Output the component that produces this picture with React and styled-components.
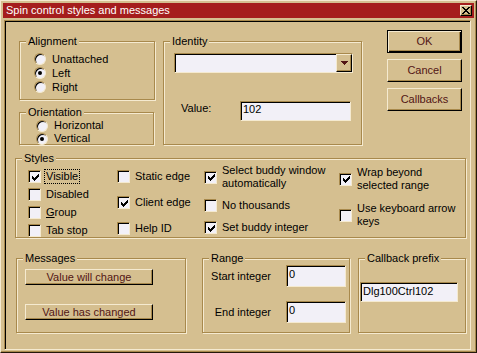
import React from 'react';
import styled, { createGlobalStyle, css } from 'styled-components';

const face = '#D5BF90';
const light = '#F5EAD0';
const shadow = '#A8894C';
const field = '#F2F0F7';
const ink = '#521515';
const titleRed = '#A51D1D';

const GlobalStyle = createGlobalStyle`
  html, body {
    margin: 0;
    padding: 0;
    background: ${face};
  }
  body {
    font-family: "Liberation Sans", Arial, sans-serif;
    font-size: 11px;
    color: #000;
  }
  * {
    box-sizing: border-box;
  }
`;

const Window = styled.div`
  width: 477px;
  height: 353px;
  background: ${face};
  border: 1px solid;
  border-color: ${light} #24180A #24180A ${light};
  box-shadow: inset -1px -1px 0 ${shadow};
  padding: 2px;
  display: flex;
  flex-direction: column;
`;

const TitleBar = styled.div`
  height: 15px;
  background: ${titleRed};
  color: #fff;
  display: flex;
  align-items: center;
  justify-content: space-between;
  padding: 0 2px 0 3px;
  line-height: 15px;
  flex-shrink: 0;
`;

const CloseButton = styled.div`
  width: 12px;
  height: 11px;
  background: ${face};
  border: 1px solid;
  border-color: ${light} #000 #000 ${light};
  box-shadow: inset -1px -1px 0 ${shadow};
  display: flex;
  align-items: center;
  justify-content: center;
`;

const Client = styled.div`
  flex: 1;
  margin: 2px 3px 0 1px;
  border: 1px solid;
  border-color: ${shadow} ${light} ${light} ${shadow};
  box-shadow: inset 1px 1px 0 #000;
  padding: 9px 0 0 10px;
  display: flex;
  flex-direction: column;
`;

const Row = styled.div`
  display: flex;
  align-items: flex-start;
  margin-top: ${p => p.$mt || 0}px;
`;

const Column = styled.div`
  display: flex;
  flex-direction: column;
  gap: ${p => p.$gap || 0}px;
  margin-left: ${p => p.$ml || 0}px;
  margin-top: ${p => p.$mt || 0}px;
`;

const Group = styled.div`
  position: relative;
  flex-shrink: 0;
  width: ${p => p.$w}px;
  height: ${p => p.$h}px;
  margin-left: ${p => p.$ml || 0}px;
  margin-top: ${p => p.$mt || 0}px;
  border: 1px solid ${shadow};
  box-shadow: inset 1px 1px 0 ${light}, 1px 1px 0 ${light};
`;

const Legend = styled.span`
  position: absolute;
  top: -7px;
  left: 6px;
  padding: 0 2px;
  background: ${face};
  line-height: 13px;
  white-space: nowrap;
`;

const RadioList = styled.div`
  display: flex;
  flex-direction: column;
  padding: ${p => p.$pt}px 0 0 ${p => p.$pl}px;
`;

const RadioRow = styled.div`
  display: flex;
  align-items: center;
  gap: 6px;
  height: ${p => p.$h}px;
  line-height: 13px;
`;

const RadioDot = styled.span`
  position: relative;
  width: 12px;
  height: 12px;
  flex-shrink: 0;
  border-radius: 50%;
  background: ${field};
  border: 1px solid;
  border-color: ${shadow} ${light} ${light} ${shadow};
  box-shadow: inset 1px 1px 0 #000;
  &::after {
    content: '';
    display: ${p => (p.$on ? 'block' : 'none')};
    position: absolute;
    left: 3px;
    top: 3px;
    width: 4px;
    height: 4px;
    border-radius: 50%;
    background: #000;
  }
`;

const StylesGrid = styled.div`
  display: grid;
  grid-template-columns: 89px 87px 135px 1fr;
  padding-left: 12px;
`;

const CheckCol = styled.div`
  display: flex;
  flex-direction: column;
  gap: ${p => p.$gap}px;
  padding-top: ${p => p.$pt}px;
`;

const CheckRow = styled.div`
  display: flex;
  align-items: center;
  gap: 5px;
  line-height: 13px;
`;

const CheckBox = styled.span`
  width: 13px;
  height: 13px;
  flex-shrink: 0;
  background: ${field};
  border: 1px solid;
  border-color: ${shadow} ${light} ${light} ${shadow};
  box-shadow: inset 1px 1px 0 #000;
  display: flex;
  align-items: center;
  justify-content: center;
  padding: 1px 0 0 1px;
`;

const CheckText = styled.span`
  width: ${p => (p.$w ? `${p.$w}px` : 'auto')};
  white-space: ${p => (p.$w ? 'normal' : 'nowrap')};
  ${p =>
    p.$focus &&
    css`
      margin-left: -1px;
      padding: 0 1px;
      outline: 1px dotted #000;
    `}
`;

const PushButton = styled.div`
  width: ${p => p.$w}px;
  height: ${p => p.$h}px;
  flex-shrink: 0;
  background: ${face};
  color: ${ink};
  display: flex;
  align-items: center;
  justify-content: center;
  line-height: 13px;
  border: 1px solid;
  border-color: ${light} #000 #000 ${light};
  box-shadow: inset -1px -1px 0 ${shadow};
  ${p =>
    p.$default &&
    css`
      border-color: #000;
      box-shadow: inset 1px 1px 0 ${light}, inset -1px -1px 0 #000,
        inset -2px -2px 0 ${shadow};
    `}
`;

const Edit = styled.div`
  width: ${p => p.$w}px;
  height: ${p => p.$h}px;
  flex-shrink: 0;
  background: ${field};
  border: 1px solid;
  border-color: ${shadow} ${light} ${light} ${shadow};
  box-shadow: inset 1px 1px 0 #000;
  padding: ${p => p.$pt || 1}px 0 0 2px;
  line-height: 13px;
  display: flex;
  align-items: flex-start;
  justify-content: space-between;
  margin: ${p => p.$m || 0};
`;

const DropButton = styled.div`
  width: 16px;
  height: 18px;
  margin-top: -1px;
  background: ${face};
  border: 1px solid;
  border-color: ${light} #000 #000 ${light};
  box-shadow: inset -1px -1px 0 ${shadow};
  display: flex;
  align-items: center;
  justify-content: center;
`;

const ValueRow = styled.div`
  display: flex;
  align-items: flex-start;
  margin-top: 28px;
  padding-left: 17px;
`;

const FieldLabel = styled.span`
  width: ${p => p.$w}px;
  line-height: 13px;
  margin-top: 1px;
`;

const MessageList = styled.div`
  display: flex;
  flex-direction: column;
  gap: 19px;
  padding: 10px 0 0 8px;
`;

const RangeGrid = styled.div`
  display: grid;
  grid-template-columns: 64px 60px;
  column-gap: 15px;
  row-gap: 14px;
  align-items: center;
  padding: 6px 0 0 4px;
  line-height: 13px;
  & > span {
    text-align: right;
  }
`;

const PrefixBody = styled.div`
  padding: 23px 0 0 1px;
`;

const CheckMark = () => (
  <svg width="7" height="7" viewBox="0 0 7 7" shapeRendering="crispEdges">
    {[2, 3, 4, 3, 2, 1, 0].map((y, x) => (
      <rect key={x} x={x} y={y} width="1" height="3" fill="#000" />
    ))}
  </svg>
);

const CloseGlyph = () => (
  <svg width="8" height="7" viewBox="0 0 8 7" shapeRendering="crispEdges" fill="#000">
    <path d="M0 0h2v1H0zM6 0h2v1H6zM1 1h2v1H1zM5 1h2v1H5zM2 2h4v1H2zM3 3h2v1H3zM2 4h4v1H2zM1 5h2v1H1zM5 5h2v1H5zM0 6h2v1H0zM6 6h2v1H6z" />
  </svg>
);

const DownArrow = () => (
  <svg width="7" height="4" viewBox="0 0 7 4" shapeRendering="crispEdges">
    <path d="M0 0h7v1H0zM1 1h5v1H1zM2 2h3v1H2zM3 3h1v1H3z" fill={ink} />
  </svg>
);

const Check = ({ on, w, focus, children }) => (
  <CheckRow>
    <CheckBox>{on && <CheckMark />}</CheckBox>
    <CheckText $w={w} $focus={focus}>
      {children}
    </CheckText>
  </CheckRow>
);

const Radio = ({ on, h, children }) => (
  <RadioRow $h={h}>
    <RadioDot $on={on} />
    <span>{children}</span>
  </RadioRow>
);

export default function App() {
  return (
    <>
      <GlobalStyle />
      <Window>
        <TitleBar>
          <span>Spin control styles and messages</span>
          <CloseButton>
            <CloseGlyph />
          </CloseButton>
        </TitleBar>
        <Client>
          <Row>
            <Column $ml={4} $mt={11} $gap={12}>
              <Group $w={136} $h={59}>
                <Legend>Alignment</Legend>
                <RadioList $pt={10} $pl={14}>
                  <Radio h={14}>Unattached</Radio>
                  <Radio h={14} on>Left</Radio>
                  <Radio h={14}>Right</Radio>
                </RadioList>
              </Group>
              <Group $w={135} $h={33}>
                <Legend>Orientation</Legend>
                <RadioList $pt={6} $pl={16}>
                  <Radio h={13}>Horizontal</Radio>
                  <Radio h={13} on>Vertical</Radio>
                </RadioList>
              </Group>
            </Column>
            <Group $w={199} $h={104} $ml={8} $mt={11}>
              <Legend>Identity</Legend>
              <Edit $w={179} $h={20} $m="11px 0 0 10px" $pt={1}>
                <span />
                <DropButton>
                  <DownArrow />
                </DropButton>
              </Edit>
              <ValueRow>
                <FieldLabel $w={59}>Value:</FieldLabel>
                <Edit $w={111} $h={20}>102</Edit>
              </ValueRow>
            </Group>
            <Column $ml={25} $gap={6}>
              <PushButton $w={75} $h={23} $default>OK</PushButton>
              <PushButton $w={75} $h={23}>Cancel</PushButton>
              <PushButton $w={75} $h={23}>Callbacks</PushButton>
            </Column>
          </Row>

          <Group $w={451} $h={80} $mt={13}>
            <Legend>Styles</Legend>
            <StylesGrid>
              <CheckCol $pt={11} $gap={5}>
                <Check on focus>Visible</Check>
                <Check>Disabled</Check>
                <Check>
                  <u>G</u>roup
                </Check>
                <Check>Tab stop</Check>
              </CheckCol>
              <CheckCol $pt={11} $gap={13}>
                <Check>Static edge</Check>
                <Check on>Client edge</Check>
                <Check>Help ID</Check>
              </CheckCol>
              <CheckCol $pt={5} $gap={9}>
                <Check on w={110}>Select buddy window automatically</Check>
                <Check>No thousands</Check>
                <Check on>Set buddy integer</Check>
              </CheckCol>
              <CheckCol $pt={7} $gap={10}>
                <Check on w={104}>Wrap beyond selected range</Check>
                <Check w={104}>Use keyboard arrow keys</Check>
              </CheckCol>
            </StylesGrid>
          </Group>

          <Row $mt={20}>
            <Group $w={170} $h={75} $ml={1}>
              <Legend>Messages</Legend>
              <MessageList>
                <PushButton $w={128} $h={16}>Value will change</PushButton>
                <PushButton $w={128} $h={16}>Value has changed</PushButton>
              </MessageList>
            </Group>
            <Group $w={148} $h={75} $ml={16}>
              <Legend>Range</Legend>
              <RangeGrid>
                <span>Start integer</span>
                <Edit $w={60} $h={22} $pt={2}>0</Edit>
                <span>End integer</span>
                <Edit $w={60} $h={22} $pt={2}>0</Edit>
              </RangeGrid>
            </Group>
            <Group $w={108} $h={75} $ml={8}>
              <Legend>Callback prefix</Legend>
              <PrefixBody>
                <Edit $w={98} $h={20} $pt={2}>Dlg100Ctrl102</Edit>
              </PrefixBody>
            </Group>
          </Row>
        </Client>
      </Window>
    </>
  );
}
